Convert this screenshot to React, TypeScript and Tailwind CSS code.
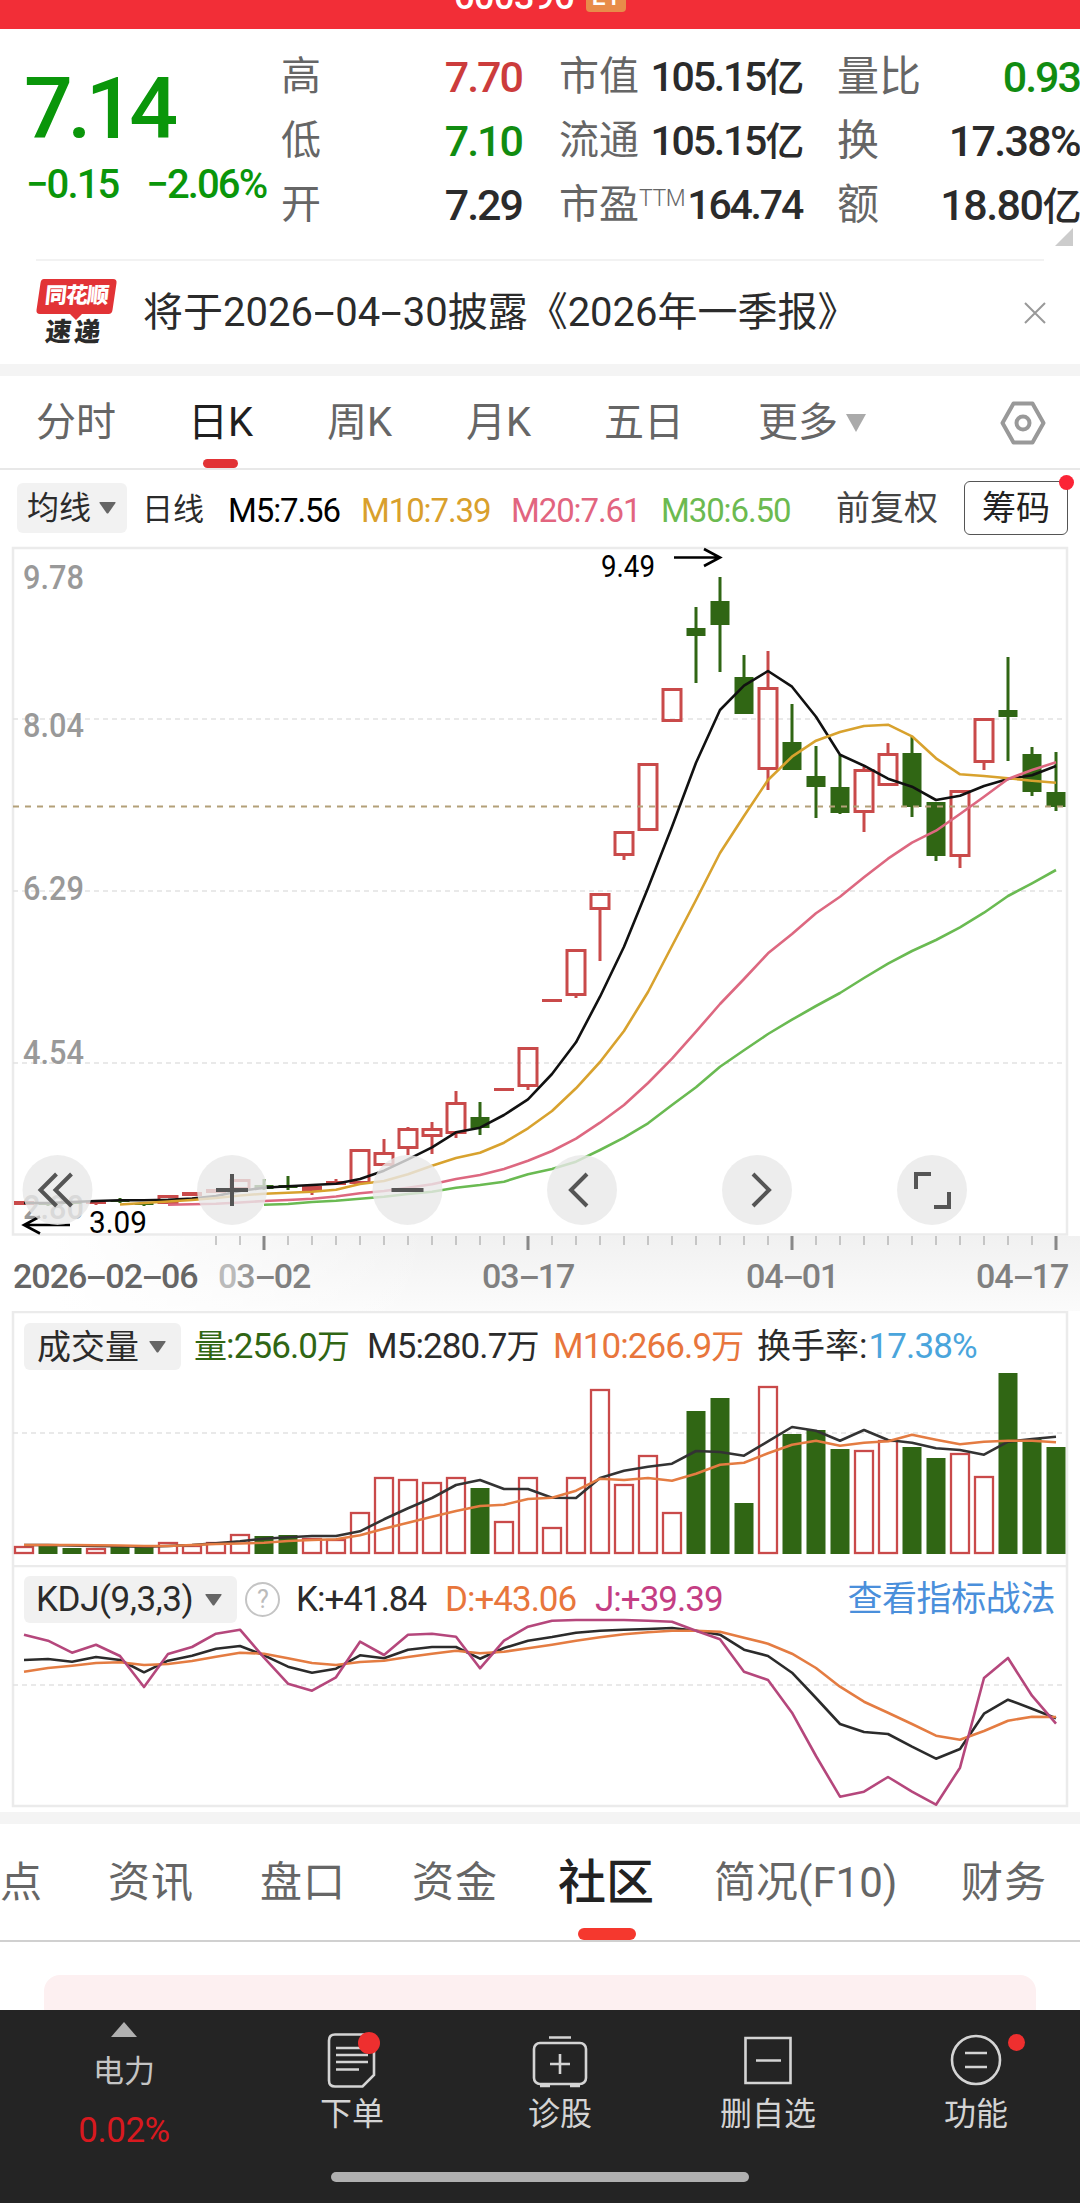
import * as React from "react";

type Point = [number, number];
// [up, high, bodyTop, bodyBottom, low]
type Candle = [boolean, number, number, number, number];

const STEP = 24;
const xAt = (i: number) => STEP + i * STEP;

const CANDLES: Candle[] = [
  [true, 1201, 1201, 1205, 1205],
  [false, 1202, 1203, 1205, 1206],
  [false, 1201, 1202, 1204, 1205],
  [true, 1201, 1202, 1204, 1205],
  [false, 1198, 1200, 1202, 1203],
  [false, 1203, 1203, 1205, 1206],
  [true, 1195, 1195, 1204, 1204],
  [true, 1192, 1192, 1196, 1196],
  [true, 1189, 1189, 1193, 1193],
  [true, 1179, 1179, 1190, 1190],
  [false, 1179, 1185, 1189, 1190],
  [false, 1176, 1185, 1188, 1190],
  [true, 1186, 1186, 1191, 1195],
  [true, 1179, 1181, 1185, 1185],
  [true, 1149, 1149, 1184, 1184],
  [true, 1139, 1152, 1166, 1166],
  [true, 1127, 1128, 1149, 1155],
  [true, 1122, 1128, 1137, 1154],
  [true, 1091, 1102, 1134, 1138],
  [false, 1102, 1117, 1128, 1135],
  [true, 1088, 1088, 1091, 1091],
  [true, 1047, 1047, 1087, 1090],
  [true, 999, 999, 1002, 1002],
  [true, 949, 949, 996, 998],
  [true, 893, 893, 910, 961],
  [true, 831, 831, 856, 860],
  [true, 763, 763, 831, 831],
  [true, 688, 688, 722, 722],
  [false, 607, 628, 636, 683],
  [false, 577, 601, 625, 672],
  [false, 655, 677, 714, 714],
  [true, 651, 687, 770, 790],
  [false, 704, 742, 770, 770],
  [false, 746, 776, 787, 818],
  [false, 755, 787, 813, 814],
  [true, 767, 769, 813, 832],
  [true, 743, 753, 786, 786],
  [false, 737, 753, 807, 817],
  [false, 802, 802, 856, 861],
  [true, 790, 790, 857, 868],
  [true, 718, 718, 763, 770],
  [false, 657, 710, 717, 761],
  [false, 747, 754, 792, 796],
  [false, 752, 792, 807, 811],
];

// top edge of each volume bar, coloured by the candle of the same day
const VOLUMES = [
  1546, 1546, 1548, 1548, 1546, 1546, 1542, 1545, 1542, 1534, 1536, 1535, 1538, 1539, 1512,
  1477, 1479, 1482, 1477, 1488, 1521, 1477, 1527, 1477, 1389, 1484, 1455, 1512, 1411, 1398,
  1503, 1386, 1434, 1430, 1449, 1450, 1440, 1447, 1458, 1453, 1476, 1373, 1439, 1447,
];

const M5 = [
  1203, 1203, 1202, 1201, 1200.3, 1200.3, 1199.7, 1198.5, 1196, 1191, 1187.7, 1186.3, 1185,
  1183.7, 1179, 1170.7, 1159.3, 1147.3, 1132.3, 1127.7, 1115, 1099.3, 1074, 1042.3, 996.7,
  946.7, 888, 826.7, 762.7, 710, 685.7, 671, 686.7, 716.7, 754.7, 765.7, 778.7, 786.7, 800,
  795.7, 786, 779, 775.3, 766,
];
const M10 = [
  1204.5, 1203, 1201.5, 1200, 1198, 1195.5, 1193.7, 1192.7, 1191.7, 1189.7, 1184, 1181, 1174.3,
  1165.7, 1158, 1152.7, 1142.7, 1128.3, 1111, 1088.3, 1062, 1031, 992, 946, 900, 853, 816, 780,
  756.7, 740.7, 732, 726, 724.7, 736.3, 758.3, 774.3, 776, 778.3, 780.7, 782.7,
];
const M20 = [
  1204.7, 1204.3, 1203.7, 1202.5, 1201, 1200, 1198.7, 1196.5, 1193.3, 1191, 1187.7, 1184.3, 1179,
  1175, 1169, 1160.7, 1151, 1138.7, 1122.7, 1105, 1083, 1058.7, 1031.7, 1004, 979, 953.3, 934,
  913.3, 896.7, 877.3, 858.7, 842.7, 830.7, 814, 796.7, 779, 770, 762.3,
];
const M30 = [
  1204.7, 1204, 1202, 1200.7, 1198.7, 1196.7, 1194, 1191.7, 1187.7, 1185, 1181.7, 1174.3, 1169,
  1161.7, 1150, 1137.7, 1123.3, 1105, 1087.3, 1066.7, 1050.3, 1034, 1019.7, 1006, 993, 978,
  963.7, 951, 940, 927.3, 912.7, 896, 883.3, 870,
];
const VOL_M5 = [
  1545, 1545, 1545.5, 1546, 1546.3, 1546.7, 1546, 1545, 1543.3, 1541.3, 1538.7, 1537.3, 1536,
  1536, 1531.3, 1519.3, 1508.3, 1498, 1485, 1480, 1489, 1489, 1497.7, 1498, 1478, 1470.7, 1466.7,
  1463.7, 1451, 1452, 1455.7, 1441.3, 1427, 1430.7, 1440.7, 1430, 1440, 1442.7, 1448.3, 1450,
  1454.7, 1441.7, 1439, 1436.7,
];
const VOL_M10 = [
  1545, 1545, 1545, 1545.3, 1545.5, 1546, 1546, 1545, 1544, 1543.5, 1542.7, 1541, 1540, 1539.3,
  1535.3, 1528.7, 1522.7, 1516.7, 1511, 1506, 1504.7, 1499, 1497.7, 1490.7, 1478.7, 1480, 1478,
  1480.7, 1473.7, 1464.7, 1462.7, 1453.3, 1444.7, 1440.7, 1445.7, 1442.7, 1441.3, 1434.7,
  1439.7, 1444.3, 1441.7, 1440.7, 1440.7, 1442.3,
];
const K_LINE = [
  1660, 1659, 1661.7, 1657, 1660, 1672.3, 1660.7, 1655.7, 1648.7, 1646, 1655.3, 1666.7, 1672.7,
  1668.7, 1655.3, 1658.3, 1649.7, 1647, 1647, 1658.7, 1648, 1640.7, 1637, 1632.7, 1630.7, 1629.7,
  1629, 1628, 1630.7, 1634.7, 1649.7, 1656, 1672.7, 1698, 1724, 1732, 1734, 1746.7, 1758.7,
  1749, 1713.7, 1699.7, 1708.7, 1718.3,
];
const D_LINE = [
  1671.7, 1668, 1665.7, 1663, 1662.3, 1665, 1664, 1661, 1656.7, 1652.7, 1653.7, 1658.3, 1663,
  1665, 1662, 1660.7, 1657, 1653.7, 1650.7, 1653.3, 1651.7, 1648.3, 1644.7, 1640.7, 1637.3,
  1634.3, 1632.3, 1630.7, 1630.7, 1631.7, 1637.7, 1643.7, 1653.7, 1668, 1686.7, 1701.7, 1712.7,
  1724, 1735.7, 1739.7, 1731, 1720.7, 1716.7, 1717,
];
const J_LINE = [
  1634.7, 1640.7, 1652.7, 1644.7, 1656, 1687, 1654, 1647, 1633.7, 1629.7, 1657.7, 1683.7, 1690.7,
  1677.3, 1641.7, 1655, 1634.7, 1633.7, 1636.7, 1668.3, 1640.7, 1626.7, 1620.7, 1620, 1620, 1620,
  1620.7, 1621.7, 1630.7, 1639.3, 1671.7, 1680, 1712.7, 1756, 1796.7, 1791.7, 1777, 1791.7,
  1804.7, 1767.7, 1678, 1658, 1695.7, 1723.7,
];

const RED = "#c94a4a";
const GREEN = "#306614";

function Line({ data, from = 0, color }: { data: number[]; from?: number; color: string }) {
  const points = data
    .map((y, i): Point => [xAt(i + from), y])
    .map((p) => p.join(","))
    .join(" ");
  return <polyline points={points} fill="none" stroke={color} strokeWidth={2.6} strokeLinejoin="round" />;
}

function GridLine({ y }: { y: number }) {
  return <line x1={13} x2={1066} y1={y} y2={y} stroke="#e2e2e2" strokeWidth={1.5} strokeDasharray="5 4" />;
}

function CandleMark({ index, candle }: { index: number; candle: Candle }) {
  const [up, high, top, bottom, low] = candle;
  const x = xAt(index);
  if (!up) {
    return (
      <g fill={GREEN}>
        <rect x={x - 1.5} y={high} width={3} height={low - high} />
        <rect x={x - 9.5} y={top} width={19} height={bottom - top} />
      </g>
    );
  }
  if (bottom - top < 6) {
    return (
      <g fill={RED}>
        <rect x={x - 1.5} y={high} width={3} height={low - high} />
        <rect x={x - 10} y={top} width={20} height={bottom - top} />
      </g>
    );
  }
  return (
    <g stroke={RED} strokeWidth={3}>
      {high < top && <line x1={x} x2={x} y1={high} y2={top} />}
      {low > bottom && <line x1={x} x2={x} y1={bottom} y2={low} />}
      <rect x={x - 9} y={top + 1.5} width={18} height={bottom - top - 3} fill="none" />
    </g>
  );
}

function VolumeBar({ index, top }: { index: number; top: number }) {
  const x = xAt(index);
  if (CANDLES[index][0]) {
    return (
      <rect x={x - 9} y={top + 1} width={18} height={1553 - top - 1} fill="none" stroke={RED} strokeWidth={2.3} />
    );
  }
  return <rect x={x - 9.5} y={top} width={19} height={1554 - top} fill={GREEN} />;
}

function PriceLabel({ y, children }: { y: number; children: string }) {
  return (
    <text x={23} y={y + 12} fontSize={34} fontWeight={500} fill="#999" textLength={61} lengthAdjust="spacingAndGlyphs">
      {children}
    </text>
  );
}

// a hyphen as wide as a digit
function Dash() {
  return <span className="inline-block w-[0.56em] scale-x-[1.9] text-center">-</span>;
}

function Dashed({ text }: { text: string }) {
  const parts = text.split("-");
  return (
    <>
      {parts.map((part, i) => (
        <React.Fragment key={i}>
          {i > 0 && <Dash />}
          {part}
        </React.Fragment>
      ))}
    </>
  );
}

function Caret({ className = "text-[#666]" }: { className?: string }) {
  return (
    <svg width="17" height="12" viewBox="0 0 17 12" className={className}>
      <path d="M1 0h15q1 0 .5 1L9.500 11q-1 1-2 0L.5 1Q0 0 1 0z" fill="currentColor" />
    </svg>
  );
}

type StatProps = {
  label: string;
  value: React.ReactNode;
  color?: string;
  labelSize?: string;
  valueSize?: string;
  sup?: string;
};

function Stat({
  label,
  value,
  color = "text-[#2b2b2b]",
  labelSize = "text-[40px]",
  valueSize = "text-[43px] tracking-[-2px]",
  sup,
}: StatProps) {
  return (
    <div className="flex h-16 items-center justify-between whitespace-nowrap">
      <span className={`flex leading-none text-[#666] ${labelSize}`}>
        {label}
        {sup && <span className="pt-0.5 text-[23px] font-light tracking-[-0.5px]">{sup}</span>}
      </span>
      <span className={`leading-none font-medium ${valueSize} ${color}`}>{value}</span>
    </div>
  );
}

function Yi({ children }: { children: string }) {
  return (
    <>
      {children}
      <span className="text-[39px]">亿</span>
    </>
  );
}

const NARROW = "text-[41px] tracking-[-2.2px]";

function Quote() {
  return (
    <section className="flex h-[230px] pt-4">
      <div className="w-[281px] pl-[24px] text-[#0a960a]">
        <div className="mt-[21px] text-[86px] leading-[86px] font-medium tracking-[-5.5px]">7.14</div>
        <div className="mt-[13px] flex gap-[28px] pl-0.5 text-[40px] leading-[40px] font-medium tracking-[-1.9px]">
          <span>−0.15</span>
          <span>−2.06%</span>
        </div>
      </div>
      <div className="w-[241px]">
        <Stat label="高" value="7.70" color="text-[#cc3c3c]" />
        <Stat label="低" value="7.10" color="text-[#118c11]" />
        <Stat label="开" value="7.29" />
      </div>
      <div className="ml-[37px] w-[243px]">
        <Stat label="市值" value={<Yi>105.15</Yi>} valueSize={NARROW} />
        <Stat label="流通" value={<Yi>105.15</Yi>} valueSize={NARROW} />
        <Stat label="市盈" sup="TTM" value="164.74" valueSize={NARROW} />
      </div>
      <div className="relative ml-[35px] w-[243px]">
        <Stat label="量比" value="0.93" color="text-[#118c11]" labelSize="text-[42px]" />
        <Stat label="换" value="17.38%" labelSize="text-[42px]" valueSize="text-[43px] tracking-[-1.7px]" />
        <Stat label="额" value={<Yi>18.80</Yi>} labelSize="text-[42px]" valueSize="text-[43px] tracking-[-1.5px]" />
        <svg width="18" height="18" className="absolute right-[7px] bottom-[13px]">
          <path d="M18 0v18H0z" fill="#ccc" />
        </svg>
      </div>
    </section>
  );
}

function Notice() {
  return (
    <section className="mx-9 flex h-[105px] items-center border-t-2 border-[#f2f2f2]">
      <div className="w-[107px]">
        <div className="relative h-[34px] w-[81px]">
          <svg width="81" height="41" viewBox="0 0 81 41" className="absolute top-0 left-0">
            <path d="M8 0h69q4 0 3.500 4l-4 27q-.5 4-4 4H46l-6 6-6-6H4q-4 0-3.500-4l4-27Q5 0 8 0z" fill="#e23336" />
          </svg>
          <div className="relative -skew-x-6 text-center text-[22px] leading-[34px] font-black tracking-[-1px] text-white">同花顺</div>
        </div>
        <div className="mt-[5px] w-[81px] -skew-x-6 pr-1 text-center text-[26px] leading-[28px] font-black tracking-[3px] text-[#2b2b2b]">速递</div>
      </div>
      <p className="flex-1 text-[40px] leading-none whitespace-nowrap text-[#2b2b2b]">
        <Dashed text="将于2026-04-30披露《2026年一季报》" />
      </p>
      <svg width="22" height="22" viewBox="0 0 22 22" className="mr-[-2px]">
        <path d="M1 1l20 20M21 1L1 21" stroke="#999" strokeWidth="2" />
      </svg>
    </section>
  );
}

function PeriodTabs() {
  return (
    <nav className="flex h-[94px] items-center border-b-2 border-[#e8e8e8] pt-0.5 pl-9 text-[40px] leading-none text-[#666]">
      <span className="w-[152px]">分时</span>
      <span className="relative flex h-full w-[139px] items-center text-[#1f1f1f]">
        日K
        <i className="absolute bottom-0 left-[15px] h-[9px] w-[35px] rounded-full bg-[#e23336]" />
      </span>
      <span className="w-[139px]">周K</span>
      <span className="w-[138px]">月K</span>
      <span className="w-[154px]">五日</span>
      <span>更多</span>
      <svg width="20" height="18" viewBox="0 0 20 18" className="ml-2">
        <path d="M0 0h20L10 18z" fill="#aaa" />
      </svg>
      <svg width="46" height="44" viewBox="0 0 46 44" fill="none" stroke="#999" strokeWidth="4" className="mr-[34px] ml-auto">
        <path d="M13.500 2.500h19L43.500 22l-11 19.500h-19L2.500 22z" strokeLinejoin="round" />
        <circle cx="23" cy="22" r="6.500" />
      </svg>
    </nav>
  );
}

function AverageRow() {
  return (
    <div className="flex h-[76px] items-center pl-[17px] text-[33px] leading-none tracking-[-1.1px]">
      <span className="flex h-[50px] w-[110px] items-center gap-2 rounded-md bg-[#f2f2f2] pl-[10px] text-[32px] tracking-normal text-[#2b2b2b]">
        均线
        <Caret />
      </span>
      <span className="ml-[15px] w-[86px] pt-0.5 text-[31px] tracking-normal text-[#2b2b2b]">日线</span>
      <span className="w-[133px] pt-1 text-black">M5:7.56</span>
      <span className="w-[150px] pt-1 text-[#d9a02c]">M10:7.39</span>
      <span className="w-[150px] pt-1 text-[#e2657f]">M20:7.61</span>
      <span className="w-[175px] pt-1 text-[#6cba50]">M30:6.50</span>
      <span className="text-[34px] tracking-normal text-[#444]">前复权</span>
      <span className="relative ml-[26px] flex h-[54px] w-[104px] items-center justify-center rounded-md border border-[#555] text-[34px] tracking-normal text-[#222]">
        筹码
        <i className="absolute top-[-7px] right-[-7px] size-[15px] rounded-full bg-[#fb2436]" />
      </span>
    </div>
  );
}

const CONTROLS: { x: number; d: string }[] = [
  { x: 57.5, d: "M-1-16l-16 16 16 16M14-16L-2 0l16 16" },
  { x: 232, d: "M-16 0h32M0-16v32" },
  { x: 407.5, d: "M-16 0h32" },
  { x: 582, d: "M5-16L-11 0 5 16" },
  { x: 757, d: "M-4-16L12 0-4 16" },
  { x: 932, d: "M-16-1v-15h15M2 17h15V2" },
];

function CandleChart() {
  return (
    <svg width="1080" height="690" viewBox="0 546 1080 690" className="block font-[Roboto]">
      <rect x={13} y={548} width={1054} height={686.5} fill="none" stroke="#ebebeb" strokeWidth={2.5} />
      <GridLine y={719} />
      <GridLine y={891} />
      <GridLine y={1063} />
      <PriceLabel y={577}>9.78</PriceLabel>
      <PriceLabel y={725}>8.04</PriceLabel>
      <PriceLabel y={888}>6.29</PriceLabel>
      <PriceLabel y={1052}>4.54</PriceLabel>
      <PriceLabel y={1207}>2.80</PriceLabel>
      {CANDLES.map((candle, i) => (
        <CandleMark key={i} index={i} candle={candle} />
      ))}
      <line x1={13} x2={1066} y1={806.500} y2={806.500} stroke="#b3a078" strokeWidth={2} strokeDasharray="6 6" />
      <Line data={M5} color="#111" />
      <Line data={M10} from={4} color="#d8a22e" />
      <Line data={M20} from={6} color="#dd6880" />
      <Line data={M30} from={10} color="#6aba52" />

      <g fontSize={31} fill="#000">
        <text x={601} y={577} textLength={54} lengthAdjust="spacingAndGlyphs">9.49</text>
        <text x={89} y={1233} textLength={58} lengthAdjust="spacingAndGlyphs">3.09</text>
      </g>
      <g fill="none" stroke="#000" strokeWidth={2.600}>
        <path d="M674 557.500h45M704 549l16 8.500-16 8.500" />
        <path d="M70 1225H25M40 1216.500l-16 8.500 16 8.500" />
      </g>

      {CONTROLS.map((c) => (
        <g key={c.x} transform={`translate(${c.x} 1190)`}>
          <circle r={35} fill="#e9e9e9" fillOpacity={0.8} />
          <path d={c.d} fill="none" stroke="#555" strokeWidth={4} />
        </g>
      ))}
    </svg>
  );
}

function DateAxis() {
  const ticks = CANDLES.map((_, i) => i).filter((i) => i >= 8);
  return (
    <div className="h-[75px] bg-linear-to-b from-[#f1f1f1] to-[#fbfbfb]">
      <div className="h-full bg-linear-to-r from-white from-5% to-transparent to-40%">
        <svg width="1080" height="15" className="block">
          {ticks.map((i) =>
            (i + 1) % 11 === 0 || i === 10 ? (
              <rect key={i} x={xAt(i) - 1.5} y={0} width={3} height={14} fill="#888" />
            ) : (
              <rect key={i} x={xAt(i) - 0.5} y={0} width={1} height={9} fill="#999" />
            ),
          )}
        </svg>
        <div className="flex pl-[13px] text-[34px] leading-[50px] font-medium tracking-[-1px] text-[#808080]">
          <span className="w-[205px] text-[#666]">
            <Dashed text="2026-02-06" />
          </span>
          <span className="w-[264px]">
            <span className="text-[#bbb]">0</span>
            <span className="text-[#999]">3</span>
            <Dashed text="-02" />
          </span>
          <span className="w-[264px]">
            <Dashed text="03-17" />
          </span>
          <span className="w-[230px]">
            <Dashed text="04-01" />
          </span>
          <span>
            <Dashed text="04-17" />
          </span>
        </div>
      </div>
    </div>
  );
}

function VolumePanel() {
  return (
    <div className="relative h-[254px]">
      <svg width="1080" height="254" viewBox="0 1311 1080 254" className="absolute inset-0">
        <path d="M13 1565V1312h1054v253" fill="none" stroke="#ebebeb" strokeWidth={2.500} />
        <GridLine y={1433} />
        {VOLUMES.map((top, i) => (
          <VolumeBar key={i} index={i} top={top} />
        ))}
        <Line data={VOL_M5} color="#333" />
        <Line data={VOL_M10} color="#e47c42" />
      </svg>
      <div className="relative flex items-center pt-3 pl-6 text-[35px] leading-none tracking-[-0.9px] text-[#2b2b2b]">
        <span className="flex h-[47px] w-[157px] items-center gap-2.5 rounded-md bg-[#f1f1f1] pl-[13px] text-[34px] tracking-normal">
          成交量
          <Caret />
        </span>
        <span className="ml-[13px] w-[173px] text-[#306614]">
          <span className="text-[33px]">量</span>:256.0<span className="text-[33px]">万</span>
        </span>
        <span className="w-[186px]">
          M5:280.7<span className="text-[33px]">万</span>
        </span>
        <span className="w-[204px] text-[#e8763c]">
          M10:266.9<span className="text-[33px]">万</span>
        </span>
        <span>
          <span className="text-[34px] tracking-normal">换手率</span>:
        </span>
        <span className="ml-0.5 text-[#4aa5dc]">17.38%</span>
      </div>
    </div>
  );
}

function KdjPanel() {
  return (
    <div className="relative h-[247px]">
      <svg width="1080" height="247" viewBox="0 1565 1080 247" className="absolute inset-0">
        <rect x={13} y={1566} width={1054} height={240} fill="none" stroke="#ebebeb" strokeWidth={2.500} />
        <GridLine y={1685} />
        <Line data={K_LINE} color="#2b2b2b" />
        <Line data={D_LINE} color="#e47c42" />
        <Line data={J_LINE} color="#b5477c" />
      </svg>
      <div className="relative flex items-center pt-[11px] pl-6 text-[35px] leading-none tracking-[-1px] text-[#2b2b2b]">
        <span className="flex h-[47px] w-[213px] items-center gap-3 rounded-md bg-[#f1f1f1] pl-[12px] tracking-[-0.4px]">
          KDJ(9,3,3)
          <Caret />
        </span>
        <span className="ml-2 flex size-[35px] items-center justify-center rounded-full border-2 border-[#c4c4c4] text-[25px] text-[#bbb]">?</span>
        <span className="ml-[16px] w-[149px]">K:+41.84</span>
        <span className="w-[150px] text-[#e8763c]">D:+43.06</span>
        <span className="text-[#c43e84]">J:+39.39</span>
        <span className="mr-[25px] ml-auto text-[35px] tracking-[-0.4px] text-[#4a8fdb]">查看指标战法</span>
      </div>
    </div>
  );
}

function SectionTabs() {
  return (
    <nav className="flex h-[118px] items-center overflow-hidden border-b-2 border-[#d0d0d0] pt-0.5 text-[42px] leading-none whitespace-nowrap text-[#666]">
      <span className="w-[108px]">点</span>
      <span className="w-[152px] tracking-[1px]">资讯</span>
      <span className="w-[152px] tracking-[1px]">盘口</span>
      <span className="w-[146px] tracking-[1px]">资金</span>
      <span className="relative flex h-full w-[156px] items-center text-[48px] font-medium text-[#222]">
        社区
        <i className="absolute bottom-0 left-5 h-3 w-[58px] rounded-full bg-[#f5382e]" />
      </span>
      <span className="w-[247px]">简况(F10)</span>
      <span className="tracking-[1px]">财务</span>
    </nav>
  );
}

function BarItem({ label, icon, dot }: { label: string; icon: React.ReactNode; dot?: string }) {
  return (
    <div className="flex w-[208px] flex-col items-center pt-[22px]">
      <div className="relative">
        <svg width="56" height="56" viewBox="0 0 56 56" fill="none" stroke="#d4d4d4" strokeWidth="2.600">
          {icon}
        </svg>
        {dot && <i className={`absolute rounded-full bg-[#ee2f2f] ${dot}`} />}
      </div>
      <span className="mt-[10px] text-[32px] leading-none text-[#d4d4d4]">{label}</span>
    </div>
  );
}

function BottomBar() {
  return (
    <footer className="h-[193px] bg-[#242424]">
      <div className="flex h-[162px]">
        <div className="flex w-[248px] flex-col items-center pt-3">
          <svg width="26" height="15">
            <path d="M13 0l13 15H0z" fill="#b0b0b0" />
          </svg>
          <span className="mt-[19px] text-[31px] leading-none text-[#c4c4c4]">电力</span>
          <span className="mt-[26px] text-[35px] leading-none tracking-[-0.5px] text-[#d8191f]">0.02%</span>
        </div>
        <BarItem
          label="下单"
          dot="top-0 right-[0px] size-[22px]"
          icon={<path d="M11 2.500h33q6 0 6 6V43L38.500 54.500H11q-6 0-6-6v-40q0-6 6-6zM12 16h32M12 23h32M12 30h32M12 37.500h23" />}
        />
        <BarItem
          label="诊股"
          icon={
            <>
              <rect x="2" y="11" width="52" height="41" rx="6" />
              <path d="M17 5.500h22M28 22v20M18 32h20M8 54h10M38 54h10" />
            </>
          }
        />
        <BarItem label="删自选" icon={<path d="M5.500 6h45v45h-45zM16 28.500h25" />} />
        <BarItem
          label="功能"
          dot="top-0.5 right-[-21px] size-[17px]"
          icon={
            <>
              <circle cx="28" cy="28" r="24" />
              <path d="M17 21h22M17 35h22" />
            </>
          }
        />
      </div>
      <div className="mx-auto h-2.5 w-[418px] rounded-full bg-[#b0b0b0]" />
    </footer>
  );
}

export default function App() {
  return (
    <main className="h-[2203px] w-[1080px] overflow-hidden bg-white font-[Roboto,'Noto_Sans_CJK_SC',sans-serif]">
      <header className="flex h-[29px] justify-center overflow-hidden bg-[#f22e37]">
        <div className="mt-[-32px] flex h-[48px] items-end gap-3">
          <span className="mb-[-6px] text-[36px] leading-[50px] font-medium tracking-[-0.5px] text-white">600396</span>
          <span className="mb-1 h-[30px] w-10 rounded-sm bg-[#e88c4a] text-center text-[26px] leading-[28px] font-medium text-white">L1</span>
        </div>
      </header>
      <Quote />
      <Notice />
      <div className="h-3 bg-[#f4f4f4]" />
      <PeriodTabs />
      <AverageRow />
      <CandleChart />
      <DateAxis />
      <VolumePanel />
      <KdjPanel />
      <div className="h-3 bg-[#f4f4f4]" />
      <SectionTabs />
      <div className="mx-11 mt-[33px] h-[35px] rounded-t-2xl bg-[#fdf0f1]" />
      <BottomBar />
    </main>
  );
}
